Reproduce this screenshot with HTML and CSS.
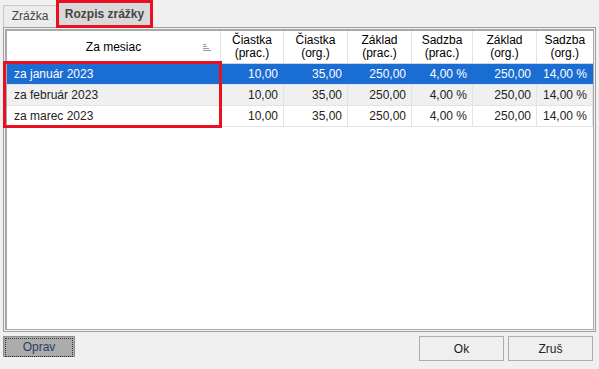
FILE: index.html
```html
<!DOCTYPE html>
<html lang="sk">
  <head>
    <meta charset="UTF-8" />
    <title>Rozpis zrážky</title>
    <link rel="stylesheet" href="styles.css">
  </head>
  <body>
    <div id="tabs">
      <div class="tab">Zrážka</div>
      <div class="tab active">Rozpis zrážky</div>
    </div>
    <div id="panel">
      <div id="grid">
        <table>
          <thead>
            <tr>
              <th class="month">Za mesiac
                <svg class="sort" width="8" height="7" viewBox="0 0 8 7">
                  <path d="M0 0.5h3M0 2.5h4M0 4.5h6M0 6.5h8" stroke="#9a9a9a" stroke-width="1" />
                </svg>
              </th>
              <th class="c2">Čiastka<br>(prac.)</th>
              <th class="c3">Čiastka<br>(org.)</th>
              <th class="c4">Základ<br>(prac.)</th>
              <th class="c5">Sadzba<br>(prac.)</th>
              <th class="c6">Základ<br>(org.)</th>
              <th class="c7">Sadzba<br>(org.)</th>
            </tr>
          </thead>
          <tbody>
            <tr class="selected">
              <td class="month">za január 2023</td>
              <td>10,00</td><td>35,00</td><td>250,00</td><td>4,00 %</td><td>250,00</td><td>14,00 %</td>
            </tr>
            <tr class="alt">
              <td class="month">za február 2023</td>
              <td>10,00</td><td>35,00</td><td>250,00</td><td>4,00 %</td><td>250,00</td><td>14,00 %</td>
            </tr>
            <tr>
              <td class="month">za marec 2023</td>
              <td>10,00</td><td>35,00</td><td>250,00</td><td>4,00 %</td><td>250,00</td><td>14,00 %</td>
            </tr>
          </tbody>
        </table>
        <div id="mark"></div>
      </div>
    </div>
    <div id="footer">
      <button class="btn focus"><span>Oprav</span></button>
      <div class="spacer"></div>
      <button class="btn ok">Ok</button>
      <button class="btn cancel">Zruš</button>
    </div>
  </body>
</html>
```
FILE: styles.css
```css
body {
  margin: 0;
  background-color: #f0f0f0;
  font-family: "Liberation Sans", Arial, sans-serif;
  font-size: 12px;
  color: #000;
  width: 599px;
  height: 369px;
  overflow: hidden;
}
#tabs {
  display: flex;
  align-items: flex-end;
  height: 27px;
  padding-left: 3px;
}
.tab {
  box-sizing: border-box;
  width: 54px;
  height: 22px;
  line-height: 20px;
  text-align: center;
  border: 1px solid #c8c8c8;
  border-bottom: none;
  background-color: #ececec;
  color: #444;
}
.tab.active {
  width: 97px;
  height: 28px;
  line-height: 22px;
  margin-left: -1px;
  margin-bottom: -1px;
  border: 3px solid #e81123;
  background-color: #d9d9d9;
  font-weight: bold;
  color: #444;
  position: relative;
}
#panel {
  box-sizing: border-box;
  margin: 0 3px;
  height: 305px;
  border: 1px solid #a0a0a0;
  padding: 1px;
  background-color: #f0f0f0;
}
#grid {
  position: relative;
  box-sizing: border-box;
  height: 301px;
  border: 1px solid #a9a9a9;
  border-left-width: 2px;
  border-top-width: 2px;
  background-color: #fff;
}
table {
  border-collapse: collapse;
  table-layout: fixed;
  width: 586px;
}
th {
  height: 32px;
  padding: 0 2px;
  font-weight: normal;
  text-align: center;
  line-height: 13px;
  background-color: #fff;
  border-right: 1px solid #e3e3e3;
  border-bottom: 1px solid #d5d5d5;
  color: #000;
}
th.month {
  width: 209px;
  position: relative;
}
th.c2 { width: 58px; }
th.c3 { width: 59px; }
th.c4 { width: 59px; }
th.c5 { width: 56px; }
th.c6 { width: 59px; }
th.c7 { border-right: none; }
.sort {
  position: absolute;
  right: 9px;
  top: 13px;
}
td {
  height: 20px;
  padding: 0 5px 0 2px;
  text-align: right;
  border-right: 1px solid #e3e3e3;
  border-bottom: 1px solid #e3e3e3;
  white-space: nowrap;
  color: #222;
}
td.month {
  text-align: left;
  padding-left: 7px;
}
tr.selected td {
  background-color: #1a6dd2;
  color: #fff;
  border-right-color: #1a6dd2;
}
tr.alt td {
  background-color: #f0f0f0;
}
#mark {
  position: absolute;
  left: -4px;
  top: 30px;
  width: 213px;
  height: 61px;
  border: 3px solid #e81123;
}
#footer {
  display: flex;
  padding: 4px 6px 0 3px;
  gap: 4px;
}
.spacer {
  flex: 1;
}
.btn {
  box-sizing: border-box;
  font-family: inherit;
  font-size: 12px;
  border: 1px solid #adadad;
  background-color: #efefef;
  color: #222;
  height: 25px;
  width: 85px;
  padding: 0;
}
.btn.focus {
  width: 72px;
  height: 21px;
  border: 1px solid #8f8f8f;
  background-color: #acacac;
  padding: 1px;
  color: #2e3a63;
}
.btn.focus span {
  display: block;
  height: 17px;
  line-height: 17px;
  border: 1px dotted #333;
}
```
